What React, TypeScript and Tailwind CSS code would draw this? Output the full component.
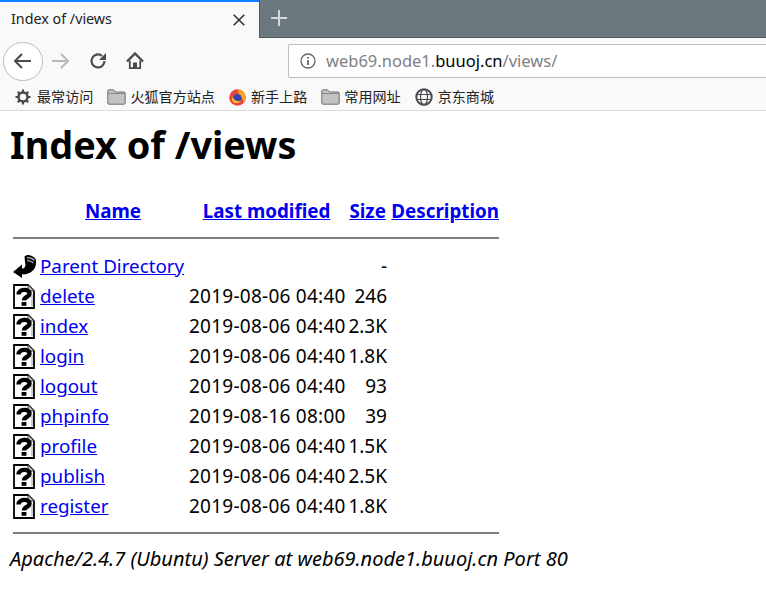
import React from "react";

const FONT = "font-['Noto_Sans','Noto_Sans_CJK_SC',sans-serif]";

const files = [
  { name: "delete", date: "2019-08-06 04:40", size: "246" },
  { name: "index", date: "2019-08-06 04:40", size: "2.3K" },
  { name: "login", date: "2019-08-06 04:40", size: "1.8K" },
  { name: "logout", date: "2019-08-06 04:40", size: "93" },
  { name: "phpinfo", date: "2019-08-16 08:00", size: "39" },
  { name: "profile", date: "2019-08-06 04:40", size: "1.5K" },
  { name: "publish", date: "2019-08-06 04:40", size: "2.5K" },
  { name: "register", date: "2019-08-06 04:40", size: "1.8K" },
];

function FolderIcon() {
  return (
    <svg width="19" height="16" viewBox="0 0 19 16" className="shrink-0">
      <path d="M.8 14V2C.8 1.300 1.300.8 2 .8h4.500l2 2.200H17c.7 0 1.200.5 1.200 1.200V14c0 .7-.5 1.200-1.200 1.200H2c-.7 0-1.200-.5-1.200-1.200z" fill="#c2c2c2" stroke="#6f6f6f" strokeWidth="1" />
      <path d="M1 4.500h17" stroke="#8a8a8a" strokeWidth="1" />
    </svg>
  );
}

function UnknownIcon() {
  return (
    <svg width="22" height="25" viewBox="0 0 22 25" className="shrink-0">
      <path d="M1 1h14l6 6v17H1z" fill="#fff" stroke="#000" strokeWidth="1.800" />
      <path d="M15 1v6h6z" fill="#c8c8c8" stroke="#444" strokeWidth="1" />
      <path d="M5.500 10.500C5.500 5 16.500 4 16.500 9.500 16.500 13.500 11 12.500 11 16.500" stroke="#000" strokeWidth="4.400" fill="none" />
      <rect x="8.600" y="18" width="4.800" height="3.800" fill="#000" />
      <path d="M19 10v12" stroke="#999" strokeWidth="1" />
    </svg>
  );
}

function BackIcon() {
  return (
    <svg width="23" height="23" viewBox="0 0 23 23" className="shrink-0">
      <path d="M0 17L9 9.500V13.500C10.500 13.500 12 13 12.500 10L12 7 11.500 1.500 14 0c4 0 7.500 1.500 9 5v3c0 6-5 11-12 11.500l-2-.5v4z" fill="#000" />
      <path d="M14 2.500c3 0 5.500 1 7.500 3M14 5.500c2.500 0 4.500.8 6.500 2.500" stroke="#9a9a9a" strokeWidth="1.500" fill="none" />
    </svg>
  );
}

function Bookmark({ icon, label, gap }: { icon: React.ReactNode; label: string; gap: string }) {
  return (
    <div className={`flex items-center ${gap}`}>
      {icon}
      <span className="whitespace-nowrap text-[14.100px] leading-none text-[#222]">{label}</span>
    </div>
  );
}

export default function App() {
  return (
    <div className={`h-[592px] w-[766px] overflow-hidden bg-white ${FONT}`}>
      {/* Tab strip */}
      <div className="flex h-[38px] bg-[#6b797e]">
        <div className="flex h-[38px] w-[259px] items-center justify-between border-t-2 border-[#0a84ff] bg-[#f9f9fa] pl-[11px] pr-[14px]">
          <span className="mb-[2px] text-[14.300px] text-[#222]">Index of /views</span>
          <svg width="12" height="12" viewBox="0 0 12 12">
            <path d="M.7.7l10.600 10.600M11.300.7L.7 11.300" stroke="#333" strokeWidth="1.600" />
          </svg>
        </div>
        <div className="flex flex-1 border-b border-[#4f5a5e]">
          <div className="flex w-[38px] items-center justify-center border-l border-[#4f5a5e] pb-[1px]">
            <svg width="16" height="16" viewBox="0 0 16 16">
              <path d="M8 0v16M0 8h16" stroke="#d4d8da" strokeWidth="2" />
            </svg>
          </div>
        </div>
      </div>

      {/* Nav bar */}
      <div className="flex h-[46px] items-center bg-[#f9f9fa] pl-[3px]">
        <div className="flex h-[39px] w-[40px] shrink-0 items-center justify-center rounded-full border border-[#bbb] bg-white">
          <svg width="20" height="18" viewBox="0 0 20 18">
            <path d="M18 9H2M9 2L2 9l7 7" stroke="#4a4a4f" strokeWidth="2" fill="none" />
          </svg>
        </div>
        <svg width="20" height="18" viewBox="0 0 20 18" className="ml-[8px] shrink-0">
          <path d="M1 9h16M10 2l7 7-7 7" stroke="#b8b8ba" strokeWidth="2" fill="none" />
        </svg>
        <svg width="18" height="18" viewBox="0 0 18 18" className="ml-[18px] shrink-0">
          <path d="M15.500 9A6.500 6.500 0 1 1 13 3.800" stroke="#4a4a4f" strokeWidth="2.200" fill="none" />
          <path d="M17 1v7h-7z" fill="#4a4a4f" />
        </svg>
        <svg width="18" height="18" viewBox="0 0 18 18" className="ml-[19px] shrink-0">
          <path d="M1 9.500l8-8 8 8" stroke="#4a4a4f" strokeWidth="2.400" fill="none" />
          <path d="M3.800 8.500V16.200h10.400V8.500" stroke="#4a4a4f" strokeWidth="1.800" fill="none" />
          <path d="M7 10.500h4V17H7z" fill="#4a4a4f" />
        </svg>
        <div className="ml-[144px] flex h-[34px] flex-1 items-center rounded-l-[2px] border border-r-0 border-[#bdbdbd] bg-white pl-[11px]">
          <svg width="16" height="16" viewBox="0 0 16 16" className="shrink-0">
            <circle cx="8" cy="8" r="7" stroke="#66666a" strokeWidth="1.300" fill="none" />
            <path d="M8 7v5M8 4v1.600" stroke="#66666a" strokeWidth="1.800" />
          </svg>
          <span className="ml-[10px] text-[16.500px] text-[#808084]">
            web69.node1.<span className="text-black">buuoj.cn</span>/views/
          </span>
        </div>
      </div>

      {/* Bookmarks */}
      <div className="flex h-[27px] items-center gap-[14px] border-b border-[#dcdcdc] bg-[#f9f9fa] pl-[15px]">
        <Bookmark
          gap="gap-[6px]"
          icon={
            <svg width="16" height="16" viewBox="0 0 16 16" className="shrink-0">
              <circle cx="8" cy="8" r="4.500" stroke="#4a4a4f" strokeWidth="2.500" fill="none" />
              <path d="M8 .5v3M8 12.500v3M.5 8h3M12.500 8h3M2.700 2.700l2 2M11.300 11.300l2 2M13.300 2.700l-2 2M4.700 11.300l-2 2" stroke="#4a4a4f" strokeWidth="2.200" />
            </svg>
          }
          label="最常访问"
        />
        <Bookmark gap="gap-[4px]" icon={<FolderIcon />} label="火狐官方站点" />
        <Bookmark
          gap="gap-[5px]"
          icon={
            <svg width="17" height="17" viewBox="0 0 17 17" className="shrink-0">
              <circle cx="8.500" cy="8.500" r="8.300" fill="#e8453c" />
              <path d="M8.500.5a8 8 0 0 1 8 8c0 2-1 4-2.500 5.300C14.500 9 11 6 8 6.500 9.500 4.500 10 2.500 8.500.5z" fill="#ffa51f" />
              <circle cx="8.500" cy="9" r="4" fill="#3b3fb6" />
              <path d="M3.500 8c1 3 4.500 5 8.500 3.500-1 2.500-6 3.500-8 1.500-1.500-1.500-1.500-3.500-.5-5z" fill="#ffb81f" />
            </svg>
          }
          label="新手上路"
        />
        <Bookmark gap="gap-[4px]" icon={<FolderIcon />} label="常用网址" />
        <Bookmark
          gap="gap-[5px]"
          icon={
            <svg width="18" height="18" viewBox="0 0 18 18" className="shrink-0">
              <circle cx="9" cy="9" r="7.700" stroke="#4a4a4f" strokeWidth="2" fill="none" />
              <ellipse cx="9" cy="9" rx="3.500" ry="7.700" stroke="#4a4a4f" strokeWidth="1.200" fill="none" />
              <path d="M1.500 6.500h15M1.500 11.500h15" stroke="#4a4a4f" strokeWidth="1.200" />
            </svg>
          }
          label="京东商城"
        />
      </div>

      {/* Directory listing */}
      <div className="px-[10px] text-[19px] leading-[30px] text-black">
        <h1 className="mt-[7px] text-[37.800px] font-bold leading-[54px]">Index of /views</h1>

        <div className="ml-[3px] mt-[24px] w-[486px]">
          <div className="flex h-[30px] whitespace-nowrap text-[18.800px] font-bold text-[#0000ee]">
            <a href="#" className="ml-[72px] w-[118px] underline">Name</a>
            <a href="#" className="w-[147px] underline">Last modified</a>
            <a href="#" className="w-[42px] underline">Size</a>
            <a href="#" className="underline">Description</a>
          </div>
          <hr className="mt-[11px] h-[2px] border-0 bg-[#808080]" />
          <div className="mt-[12px] flex h-[30px] items-center">
            <BackIcon />
            <a href="#" className="ml-[4px] text-[18.800px] text-[#0000ee] underline">Parent Directory</a>
            <span className="ml-auto mr-[112px]">-</span>
          </div>
          {files.map((f) => (
            <div key={f.name} className="flex h-[30px] items-center whitespace-nowrap">
              <div className="flex w-[176px] items-center gap-[5px]">
                <UnknownIcon />
                <a href="#" className="text-[18.800px] text-[#0000ee] underline">{f.name}</a>
              </div>
              <span className="w-[156px] tracking-[0.25px]">{f.date}</span>
              <span className="w-[42px] text-right">{f.size}</span>
            </div>
          ))}
          <hr className="mt-[11px] h-[2px] border-0 bg-[#808080]" />
        </div>

        <div className="mt-[10px] whitespace-nowrap text-[20px] italic">Apache/2.4.7 (Ubuntu) Server at web69.node1.buuoj.cn Port 80</div>
      </div>
    </div>
  );
}
